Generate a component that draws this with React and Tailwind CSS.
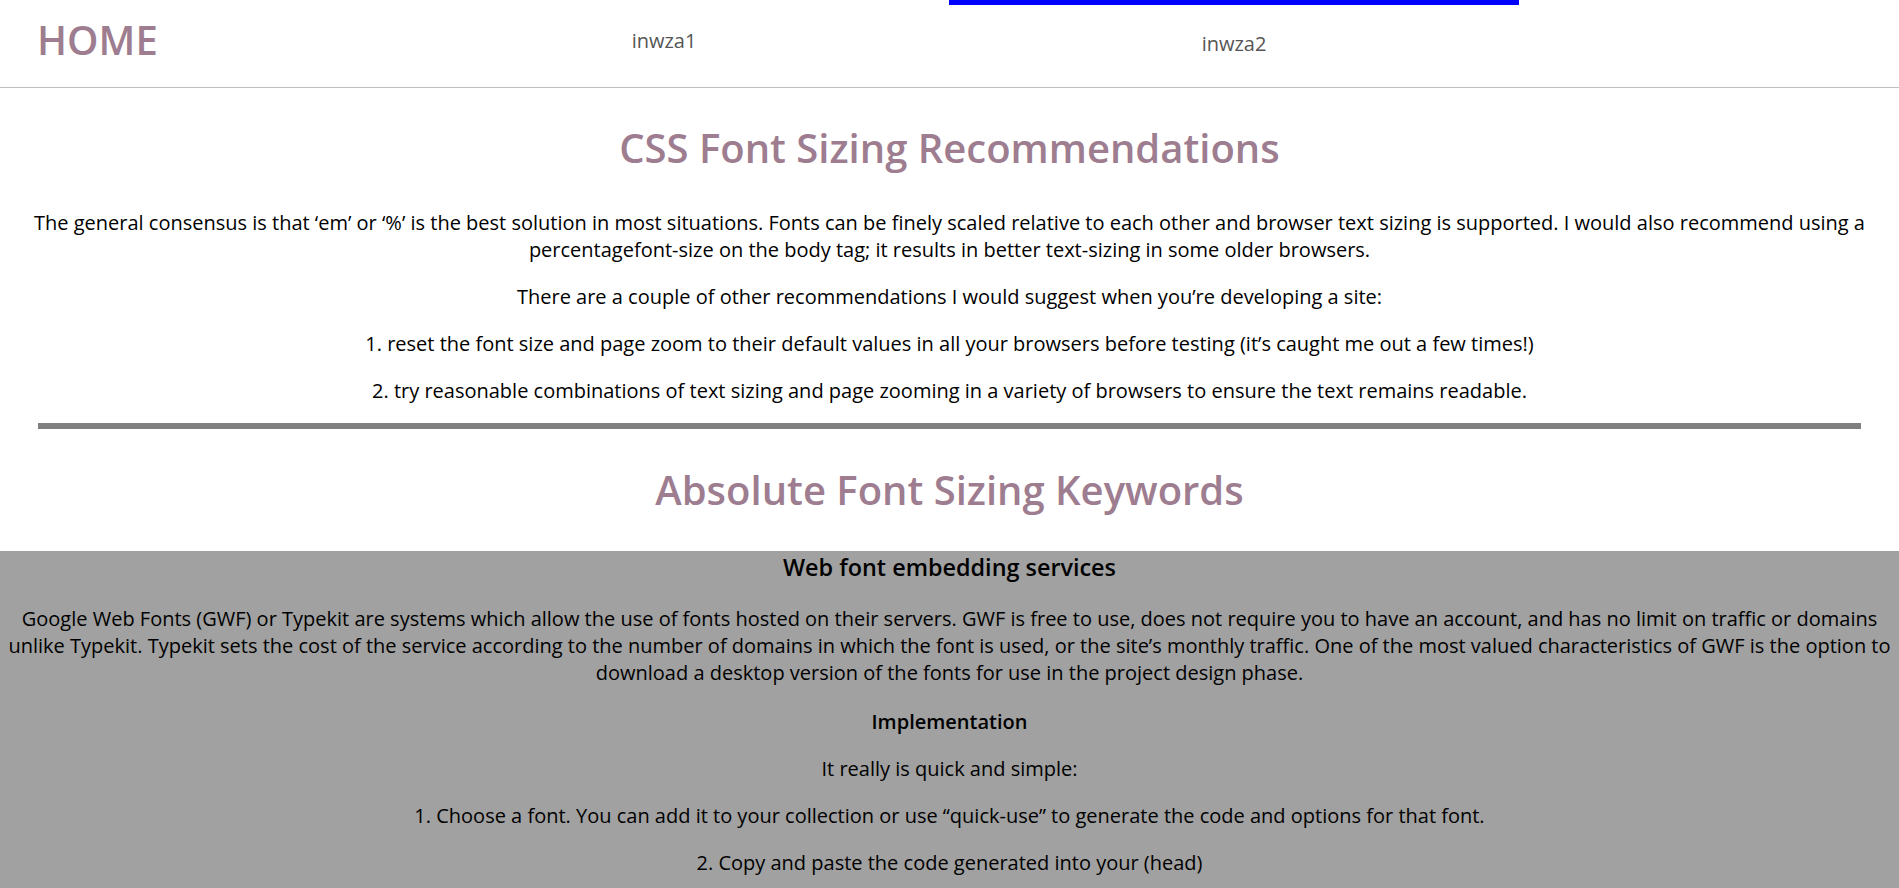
import React from "react";

const navItems = [
  { id: "inwza1", label: "inwza1", active: false },
  { id: "inwza2", label: "inwza2", active: true },
];

const intro = [
  "There are a couple of other recommendations I would suggest when you’re developing a site:",
  "1. reset the font size and page zoom to their default values in all your browsers before testing (it’s caught me out a few times!)",
  "2. try reasonable combinations of text sizing and page zooming in a variety of browsers to ensure the text remains readable.",
];

const steps = [
  "It really is quick and simple:",
  "1. Choose a font. You can add it to your collection or use “quick-use” to generate the code and options for that font.",
  "2. Copy and paste the code generated into your (head)",
];

export default function App() {
  return (
    <div className="min-h-screen flex flex-col bg-white font-['Open_Sans',sans-serif] text-black">
      {/* Header */}
      <header className="flex items-start h-[88px] border-b border-[#c0c0c0]">
        <div className="w-[379px] pl-[37px] pt-[13px]">
          <h1 className="text-[40px] leading-[54px] font-semibold text-[#9d7d8f]">HOME</h1>
        </div>
        <nav className="flex">
          {navItems.map((item) => (
            <a
              key={item.id}
              href="#"
              className={`w-[570px] text-center text-[20px] leading-[27px] text-[#555555] ${
                item.active ? "border-t-[5px] border-[#0000ff] pt-[25px]" : "pt-[27px]"
              }`}
            >
              {item.label}
            </a>
          ))}
        </nav>
      </header>

      {/* Recommendations */}
      <section className="px-[30px] text-center">
        <h2 className="mt-[33px] text-[40px] leading-[54px] font-semibold text-[#9d7d8f]">
          CSS Font Sizing Recommendations
        </h2>
        <p className="mt-[34px] text-[20px] leading-[27px]">
          The general consensus is that ‘em’ or ‘%’ is the best solution in most situations. Fonts can be
          finely scaled relative to each other and browser text sizing is supported. I would also recommend
          using a percentagefont-size on the body tag; it results in better text-sizing in some older browsers.
        </p>
        {intro.map((text) => (
          <p key={text} className="mt-[20px] text-[20px] leading-[27px]">
            {text}
          </p>
        ))}
        <div className="mt-[19px] mx-[8px] h-[6px] bg-[#808080]" />
        <h2 className="mt-[34px] text-[40px] leading-[54px] font-semibold text-[#9d7d8f]">
          Absolute Font Sizing Keywords
        </h2>
      </section>

      {/* Web fonts */}
      <section className="flex-1 mt-[34px] bg-[#a1a1a1] px-[8px] pb-[8px] text-center">
        <h3 className="text-[23.4px] leading-[32px] font-semibold">Web font embedding services</h3>
        <p className="mt-[22px] text-[20px] leading-[27px]">
          Google Web Fonts (GWF) or Typekit are systems which allow the use of fonts hosted on their servers.
          GWF is free to use, does not require you to have an account, and has no limit on traffic or domains
          unlike Typekit. Typekit sets the cost of the service according to the number of domains in which the
          font is used, or the site’s monthly traffic. One of the most valued characteristics of GWF is the
          option to download a desktop version of the fonts for use in the project design phase.
        </p>
        <p className="mt-[22px] text-[20px] leading-[27px] font-semibold">Implementation</p>
        {steps.map((text) => (
          <p key={text} className="mt-[20px] text-[20px] leading-[27px]">
            {text}
          </p>
        ))}
      </section>
    </div>
  );
}
